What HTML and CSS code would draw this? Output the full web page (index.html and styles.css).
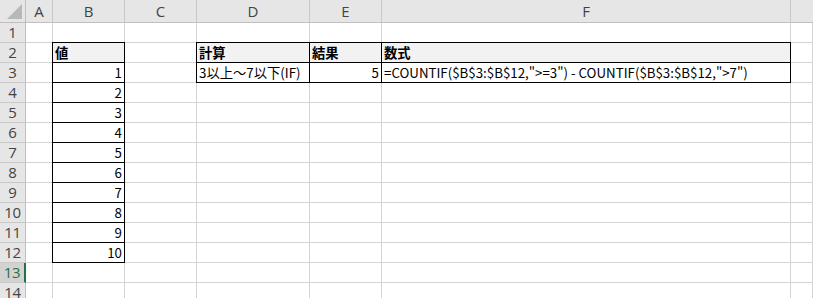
FILE: index.html
```html
<!DOCTYPE html>
<html lang="ja">
<head>
<meta charset="utf-8">
<link rel="stylesheet" href="styles.css">
</head>
<body>
<div class="sheet">
  <div class="corner"><span class="tri"></span></div>
  <div class="ch">A</div><div class="ch">B</div><div class="ch">C</div><div class="ch">D</div><div class="ch">E</div><div class="ch">F</div><div class="ch last"></div>

  <div class="rh">1</div><div class="c"></div><div class="c"></div><div class="c"></div><div class="c"></div><div class="c"></div><div class="c"></div><div class="c"></div>

  <div class="rh">2</div><div class="c"></div><div class="c t th">値</div><div class="c"></div><div class="c t th">計算</div><div class="c t th">結果</div><div class="c t th">数式</div><div class="c"></div>

  <div class="rh">3</div><div class="c"></div><div class="c t num">1</div><div class="c"></div><div class="c t">3以上～7以下(IF)</div><div class="c t num">5</div><div class="c t">=COUNTIF($B$3:$B$12,"&gt;=3") - COUNTIF($B$3:$B$12,"&gt;7")</div><div class="c"></div>

  <div class="rh">4</div><div class="c"></div><div class="c t num">2</div><div class="c"></div><div class="c"></div><div class="c"></div><div class="c"></div><div class="c"></div>
  <div class="rh">5</div><div class="c"></div><div class="c t num">3</div><div class="c"></div><div class="c"></div><div class="c"></div><div class="c"></div><div class="c"></div>
  <div class="rh">6</div><div class="c"></div><div class="c t num">4</div><div class="c"></div><div class="c"></div><div class="c"></div><div class="c"></div><div class="c"></div>
  <div class="rh">7</div><div class="c"></div><div class="c t num">5</div><div class="c"></div><div class="c"></div><div class="c"></div><div class="c"></div><div class="c"></div>
  <div class="rh">8</div><div class="c"></div><div class="c t num">6</div><div class="c"></div><div class="c"></div><div class="c"></div><div class="c"></div><div class="c"></div>
  <div class="rh">9</div><div class="c"></div><div class="c t num">7</div><div class="c"></div><div class="c"></div><div class="c"></div><div class="c"></div><div class="c"></div>
  <div class="rh">10</div><div class="c"></div><div class="c t num">8</div><div class="c"></div><div class="c"></div><div class="c"></div><div class="c"></div><div class="c"></div>
  <div class="rh">11</div><div class="c"></div><div class="c t num">9</div><div class="c"></div><div class="c"></div><div class="c"></div><div class="c"></div><div class="c"></div>
  <div class="rh">12</div><div class="c"></div><div class="c t num">10</div><div class="c"></div><div class="c"></div><div class="c"></div><div class="c"></div><div class="c"></div>
  <div class="rh sel">13</div><div class="c"></div><div class="c"></div><div class="c"></div><div class="c"></div><div class="c"></div><div class="c"></div><div class="c"></div>
  <div class="rh">14</div><div class="c"></div><div class="c"></div><div class="c"></div><div class="c"></div><div class="c"></div><div class="c"></div><div class="c"></div>
</div>
</body>
</html>
```
FILE: styles.css
```css
html, body {
  margin: 0;
  padding: 0;
  background: #fff;
  overflow: hidden;
}
.sheet {
  display: grid;
  grid-template-columns: 26px 27px 72px 72px 113px 72px 409px 1fr;
  grid-template-rows: 23px repeat(14, 20px);
  width: 813px;
  font-family: "Noto Sans CJK JP", sans-serif;
  font-size: 13.3px;
  color: #000;
}
.corner {
  background: #e6e6e6;
  border-right: 1px solid #bfbfbf;
  border-bottom: 1px solid #bfbfbf;
  box-sizing: border-box;
  position: relative;
}
.tri {
  position: absolute;
  right: 3px;
  bottom: 3px;
  width: 0;
  height: 0;
  border-left: 15px solid transparent;
  border-bottom: 15px solid #b8b8b8;
}
.ch {
  background: #e6e6e6;
  border-right: 1px solid #c8c8c8;
  border-bottom: 1px solid #bfbfbf;
  box-sizing: border-box;
  display: flex;
  align-items: center;
  justify-content: center;
  font-family: "Open Sans", sans-serif;
  font-size: 15px;
  color: #444;
}
.ch.last { border-right: none; }
.rh {
  background: #e6e6e6;
  border-right: 1px solid #bfbfbf;
  border-bottom: 1px solid #c8c8c8;
  box-sizing: border-box;
  display: flex;
  align-items: center;
  justify-content: center;
  font-family: "Open Sans", sans-serif;
  font-size: 15px;
  line-height: 18px;
  padding-bottom: 1px;
  color: #444;
  letter-spacing: -0.3px;
}
.rh.sel {
  background: #d2d2d2;
  color: #217346;
  border-right: 2px solid #217346;
}
.c {
  border-right: 1px solid #d4d4d4;
  border-bottom: 1px solid #d4d4d4;
  box-sizing: border-box;
  position: relative;
  display: flex;
  align-items: center;
  padding: 0 2px 0 2px;
  white-space: nowrap;
  line-height: 19px;
}
.c.t::after {
  content: "";
  position: absolute;
  top: -1px;
  left: -1px;
  right: -1px;
  bottom: -1px;
  border: 1px solid #000;
  pointer-events: none;
}
.c.th {
  background: #f2f2f2;
  font-weight: bold;
}
.c.num {
  justify-content: flex-end;
}
```
